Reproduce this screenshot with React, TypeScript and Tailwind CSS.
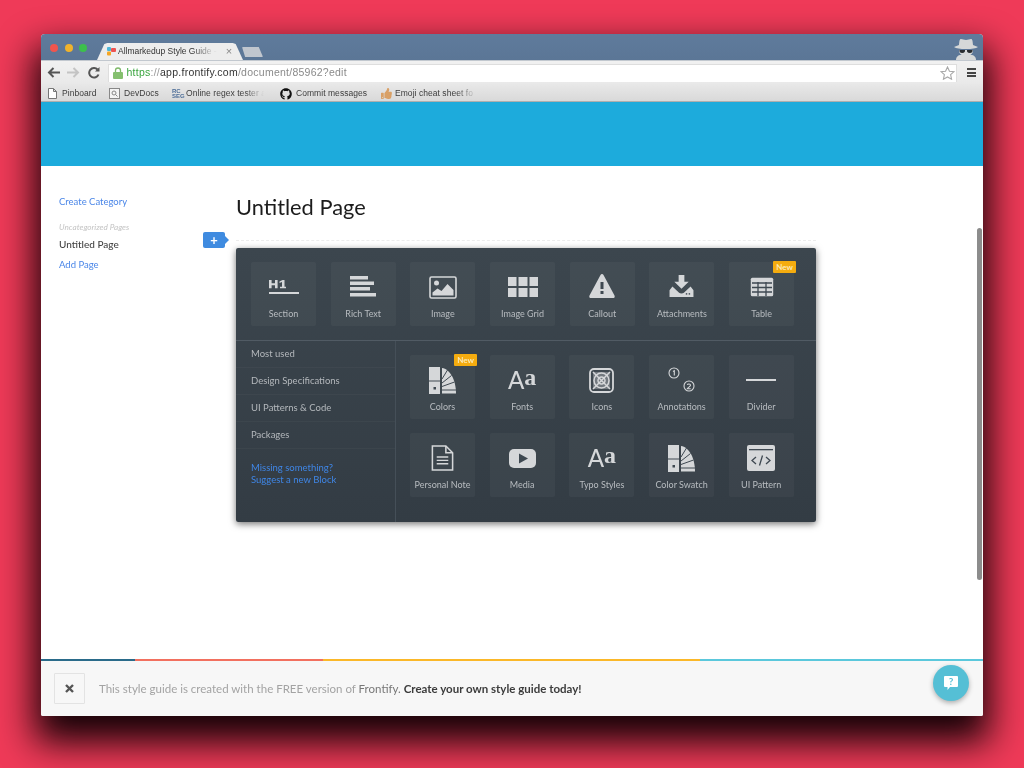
import type { ReactNode } from "react"
import { FaGithub, FaThumbsUp } from "react-icons/fa"

const lato = "font-['Lato','Noto_Sans',sans-serif]"

const Swatch = () => (
  <svg width="27" height="27" viewBox="0 0 27 27" fill="#d5d7d9">
    <path d="M0 0h11v27H0z" />
    <path d="M0 13.500h11v1H0z" fill="#3e4851" />
    <rect x="4.500" y="20" width="2.500" height="2.500" fill="#3e4851" />
    <path d="M13 1c8 1 14 12 14 25.500H13z" />
    <path d="M13 12l5.500-9M13 16l9.500-7.500M13 19.500l12.500-4.500M13 23h14" stroke="#3e4851" strokeWidth="1" fill="none" />
  </svg>
)

const AaGlyph = () => (
  <div className="flex items-start text-[#d5d7d9] h-[20px] -mt-[3px]">
    <span className="text-[24px] leading-[22px] font-medium">A</span>
    <span className="text-[24px] leading-[16px] font-bold font-['Liberation_Serif',serif]">a</span>
  </div>
)

const icons: Record<string, ReactNode> = {
  Section: (
    <svg width="30" height="20" viewBox="0 0 30 20" fill="#d5d7d9">
      <path d="M0 3h2.600v3.200h3.400V3h2.600v8.300H6V8.300H2.600v3H0z" />
      <path d="M10.500 4.500L13.500 3h2v6.800h1.500v1.500h-6V9.800h2V5l-2.500 1z" />
      <rect y="15" width="30" height="2" />
    </svg>
  ),
  "Rich Text": (
    <svg width="26" height="21" viewBox="0 0 26 21" fill="#d5d7d9" className="-mt-[2px]">
      <rect width="18" height="3.500" />
      <rect y="5.500" width="24" height="3.500" />
      <rect y="11" width="20" height="3.500" />
      <rect y="17" width="26" height="3.500" />
    </svg>
  ),
  Image: (
    <svg width="28" height="23" viewBox="0 0 28 23">
      <rect x="1" y="1" width="26" height="21" rx="1.500" fill="none" stroke="#d5d7d9" strokeWidth="1.600" />
      <circle cx="7.500" cy="7" r="2.500" fill="#d5d7d9" />
      <path d="M3.500 19.500v-3l5-4 4 2.500 6-7 6 6v5.500z" fill="#d5d7d9" />
    </svg>
  ),
  "Image Grid": (
    <svg width="30" height="20" viewBox="0 0 30 20" fill="#d5d7d9">
      <rect width="8.500" height="9" />
      <rect x="10.500" width="9" height="9" />
      <rect x="21.500" width="8.500" height="9" />
      <rect y="11" width="8.500" height="9" />
      <rect x="10.500" y="11" width="9" height="9" />
      <rect x="21.500" y="11" width="8.500" height="9" />
    </svg>
  ),
  Callout: (
    <svg width="26" height="24" viewBox="0 0 26 24" className="-mt-[2px]">
      <path d="M13 0c.7 0 1.200.4 1.500 1l11 20.500c.6 1.200-.1 2.500-1.500 2.500H2c-1.400 0-2.100-1.300-1.500-2.500L11.500 1c.3-.6.800-1 1.500-1z" fill="#d5d7d9" />
      <rect x="11.500" y="8" width="3" height="7" fill="#3e4851" />
      <rect x="11.500" y="17" width="3" height="3" fill="#3e4851" />
    </svg>
  ),
  Attachments: (
    <svg width="25" height="22" viewBox="0 0 25 23" fill="#d5d7d9" className="-mt-[3px]">
      <path d="M9.500 0h6v7h4.500l-7.500 7.500L5 7h4.500z" />
      <path d="M0 16l3-4 7 6.500c1.300 1 3.700 1 5 0l7-6.500 3 4v7H0z" />
      <rect x="17" y="19" width="1.500" height="1.500" fill="#3e4851" />
      <rect x="20" y="19" width="1.500" height="1.500" fill="#3e4851" />
    </svg>
  ),
  Table: (
    <svg width="24" height="20" viewBox="0 0 24 20">
      <rect x="0.800" y="0.800" width="22.400" height="18.400" rx="1.500" fill="#d5d7d9" />
      <path d="M2 6h20M2 10.500h20M2 15h20M8 5v14M16 5v14" stroke="#3e4851" strokeWidth="1.300" />
    </svg>
  ),
  Colors: <Swatch />,
  Fonts: <AaGlyph />,
  Icons: (
    <svg width="25" height="25" viewBox="0 0 25 25" fill="none" stroke="#d5d7d9">
      <rect x="1" y="1" width="23" height="23" rx="4" strokeWidth="1.800" />
      <rect x="4" y="4" width="17" height="17" fill="#d5d7d9" stroke="none" opacity=".35" />
      <circle cx="12.500" cy="12.500" r="7.500" strokeWidth="1.500" />
      <circle cx="12.500" cy="12.500" r="3.500" strokeWidth="1.500" />
      <path d="M4 4l17 17M21 4L4 21" strokeWidth="1.500" />
    </svg>
  ),
  Annotations: (
    <svg width="28" height="26" viewBox="0 0 28 26" fill="none" stroke="#d5d7d9" strokeWidth="1.100">
      <circle cx="6" cy="6" r="5" />
      <circle cx="21" cy="19" r="5" />
      <path d="M5 4.500l1.300-.8v4.800" />
      <path d="M19.300 17.800c.4-1.200 3.200-1.200 3.200.4 0 1.200-2.600 2.200-3.200 3.500h3.400" />
    </svg>
  ),
  Divider: (
    <svg width="30" height="3" viewBox="0 0 30 3" fill="#d5d7d9">
      <rect width="30" height="2" />
    </svg>
  ),
  "Personal Note": (
    <svg width="23" height="26" viewBox="0 0 23 27" fill="none" stroke="#d5d7d9" strokeWidth="1.600">
      <path d="M1 1h14l7 7v18H1z" />
      <path d="M15 1v7h7" />
      <path d="M5.500 12.500h12M5.500 16h12M5.500 19.500h12" strokeWidth="1.400" />
    </svg>
  ),
  Media: (
    <svg width="27" height="19" viewBox="0 0 27 19">
      <rect width="27" height="19" rx="5" fill="#d5d7d9" />
      <path d="M10 4.500l9 5-9 5z" fill="#3e4851" />
    </svg>
  ),
  "Typo Styles": <AaGlyph />,
  "Color Swatch": <Swatch />,
  "UI Pattern": (
    <svg width="28" height="26" viewBox="0 0 28 26">
      <rect width="28" height="26" rx="2" fill="#d5d7d9" />
      <rect x="2" y="4" width="24" height="1.300" fill="#3e4851" />
      <path d="M9 12l-4 3.500L9 19M19 12l4 3.500L19 19M15.500 10.500l-3 10" fill="none" stroke="#3e4851" strokeWidth="1.300" />
    </svg>
  ),
}

function Tile({ label, isNew }: { label: string; isNew?: boolean }) {
  return (
    <div className="relative w-[65px] h-[64px] rounded-[2px] bg-white/[0.035] flex flex-col items-center">
      <div className="h-[42px] mt-[4px] flex items-center justify-center">{icons[label]}</div>
      <span className="absolute top-[46px] w-full text-center text-[9px] leading-[12px] text-[#b8bcc0] whitespace-nowrap">{label}</span>
      {isNew && (
        <span className="absolute -top-[1px] -right-[2px] w-[23px] h-[12px] rounded-[1px] bg-[#f5ac0f] text-[#fbe9b8] text-[8px] leading-[12px] text-center font-bold">New</span>
      )}
    </div>
  )
}

const bookmarkClass = "text-[8.500px] text-[#3c3c3c] tracking-[0.05px] whitespace-nowrap"
const fadeClass = "[mask-image:linear-gradient(90deg,#000_75%,transparent)]"

export default function App() {
  return (
    <div className="w-[1024px] h-[768px] overflow-hidden pt-[34px] pl-[41px] bg-[#ef3a58]">
      <div className={`w-[942px] h-[682px] flex flex-col rounded-t-[4px] rounded-b-[2px] overflow-hidden bg-white shadow-[0_20px_36px_6px_rgba(12,0,4,0.97)] blur-[0.5px] ${lato}`}>
        {/* browser chrome */}
        <div className="h-[26px] shrink-0 flex items-end bg-[linear-gradient(#5f7b9c,#5b7696)] relative">
          <div className="absolute left-[9px] top-[10px] flex gap-[6.500px]">
            <span className="w-[8px] h-[8px] rounded-full bg-[#f0554d]" />
            <span className="w-[8px] h-[8px] rounded-full bg-[#f0b32c]" />
            <span className="w-[8px] h-[8px] rounded-full bg-[#3cc04c]" />
          </div>
          <div className="ml-[56px] w-[146px] h-[17px] flex items-center pl-[10px] bg-[#ededed] [clip-path:polygon(0_100%,5%_6%,7%_0,93%_0,95%_6%,100%_100%)]">
            <svg width="9" height="9" viewBox="0 0 9 9" className="shrink-0">
              <rect x="0" y="0" width="4" height="4" rx="1" fill="#4db6d8" />
              <rect x="4" y="1" width="5" height="4" rx="1" fill="#ef5350" />
              <rect x="0" y="4.500" width="4" height="4" rx="1" fill="#f5a623" />
            </svg>
            <span className={`ml-[2px] font-['Liberation_Sans',sans-serif] text-[8.500px] text-[#333] whitespace-nowrap ${fadeClass}`}>Allmarkedup Style Guide -</span>
            <span className="ml-[9px] text-[#888] text-[11px] leading-none font-['Liberation_Sans',sans-serif]">×</span>
          </div>
          <div className="ml-[-1px] mb-[3px] w-[21px] h-[10px] bg-[#c0c6ce] rounded-[1px] [clip-path:polygon(0_0,80%_0,100%_100%,15%_100%)]" />
          {/* incognito figure */}
          <svg width="24" height="21" viewBox="0 0 24 21" className="absolute right-[5px] top-[5px]" fill="#d6d8d8">
            <path d="M7 0c1.500 0 3 1 5 1s3.500-1 5-1c1.200 0 1.700 1.500 2 6l5 2c-2 1.500-6 2-12 2S2 9.500 0 8l5-2c.3-4.500.8-6 2-6z" />
            <path d="M5 11h14c0 4-3 6-7 6s-7-2-7-6z" />
            <path d="M2 21c0-3 2-5 5-5h10c3 0 5 2 5 5z" />
            <path d="M5.500 11h5.500c.3 1-.3 3-2.800 3s-3-1.600-2.700-3zM13 11h5.500c.3 1.400-.2 3-2.700 3s-3.100-2-2.800-3z" fill="#2a2d30" />
          </svg>
        </div>

        <div className="h-[24px] shrink-0 flex items-center bg-[linear-gradient(#f1f1f1,#e9e9e9)] border-t border-[#c2c8cf] font-['Liberation_Sans',sans-serif]">
          <svg width="13" height="11" viewBox="0 0 13 11" className="ml-[6px]" fill="none" stroke="#555" strokeWidth="2">
            <path d="M13 5.500H2M6.500 1L2 5.500 6.500 10" />
          </svg>
          <svg width="13" height="11" viewBox="0 0 13 11" className="ml-[7px]" fill="none" stroke="#c4c4c4" strokeWidth="2">
            <path d="M0 5.500h11M6.500 1L11 5.500 6.500 10" />
          </svg>
          <svg width="12" height="12" viewBox="0 0 12 12" className="ml-[8px]" fill="none" stroke="#555" strokeWidth="2">
            <path d="M10.500 7.500A4.800 4.800 0 1 1 9.500 2.500" />
            <path d="M11.500 0v4.500H7z" fill="#555" stroke="none" />
          </svg>
          <div className="ml-[8px] w-[849px] h-[18px] bg-white flex items-center pl-[3px] border border-[#dedede] border-b-0">
            <svg width="10" height="12" viewBox="0 0 10 12" className="ml-[0.500px]">
              <path d="M2.500 5.500V3.500a2.500 2.500 0 0 1 5 0v2" fill="none" stroke="#7fb96a" strokeWidth="1.300" />
              <rect y="5" width="10" height="7" rx="1" fill="#85c06f" />
            </svg>
            <span className="ml-[4px] text-[10.500px] tracking-[0.250px] text-[#555] whitespace-nowrap">
              <span className="text-[#3aa53f]">https</span>
              <span className="text-[#999]">://</span>
              <span className="text-[#333]">app.frontify.com</span>
              <span className="text-[#8a8a8a]">/document/85962?edit</span>
            </span>
            <svg width="15" height="14" viewBox="0 0 24 23" className="ml-auto mr-[1px]" fill="#fff" stroke="#a8a8a8" strokeWidth="1.800">
              <path d="M12 1.500l3.200 7 7.500.8-5.600 5 1.600 7.400L12 18l-6.700 3.700 1.600-7.400-5.600-5 7.500-.8z" />
            </svg>
          </div>
          <div className="ml-[10px] w-[9px] flex flex-col gap-[1.500px]">
            <span className="h-[2px] bg-[#444]" />
            <span className="h-[2px] bg-[#444]" />
            <span className="h-[2px] bg-[#444]" />
          </div>
        </div>

        <div className="h-[18px] shrink-0 flex items-center pt-[2px] bg-[linear-gradient(#e8e8e8,#d9d9d9)] border-b border-[#aeaeae] font-['Liberation_Sans',sans-serif]">
          <svg width="9" height="11" viewBox="0 0 9 11" className="ml-[7px]" fill="#fff" stroke="#777">
            <path d="M.5.500h5l3 3v7h-8zM5.500.500v3h3" />
          </svg>
          <span className={`ml-[5px] w-[35px] ${bookmarkClass}`}>Pinboard</span>
          <svg width="11" height="11" viewBox="0 0 11 11" className="ml-[12px]" fill="#f4f4f4" stroke="#888">
            <rect x=".5" y=".5" width="10" height="10" />
            <circle cx="5" cy="5" r="2" fill="none" />
            <path d="M6.500 6.500L8.500 8.500" />
          </svg>
          <span className={`ml-[4px] w-[35px] ${bookmarkClass}`}>DevDocs</span>
          <span className="ml-[13px] w-[10px] text-[6px] leading-[5px] font-bold text-[#4b6c97]">RC<br />SEG</span>
          <span className={`ml-[4px] w-[78px] ${bookmarkClass} ${fadeClass}`}>Online regex tester a</span>
          <FaGithub className="ml-[16px] text-[#111]" size={12} />
          <span className={`ml-[4px] w-[72px] ${bookmarkClass}`}>Commit messages</span>
          <FaThumbsUp className="ml-[13px] text-[#d9a066]" size={11} />
          <span className={`ml-[3px] w-[82px] ${bookmarkClass} ${fadeClass}`}>Emoji cheat sheet fo</span>
        </div>

        {/* app header */}
        <div className="h-[64px] shrink-0 bg-[#1dabdc]" />

        {/* page body */}
        <div className="flex-1 flex relative min-h-0">
          <aside className="w-[195px] shrink-0 pl-[18px] pt-[29px]">
            <a className="block text-[9.500px] leading-[13px] text-[#4a86e8]">Create Category</a>
            <p className="mt-[14px] text-[8.200px] leading-[11px] italic text-[#c4c4c4]">Uncategorized Pages</p>
            <p className="mt-[5px] text-[10px] leading-[13px] text-[#444] font-medium">Untitled Page</p>
            <a className="block mt-[7px] text-[9.500px] leading-[13px] text-[#4a86e8]">Add Page</a>
          </aside>

          <main className="flex-1 pt-[26px] relative">
            <h1 className="text-[21.800px] leading-[29px] text-[#1c1c1c]">Untitled Page</h1>
            <div className="absolute left-[0px] top-[74px] w-[580px] border-t border-dashed border-[#ececec]" />
            <div className="absolute left-[-33px] top-[66px] w-[26px] h-[16px]">
              <div className="w-[22px] h-[16px] rounded-[2px] bg-[#3f8be0] flex items-center justify-center text-white text-[13px] font-bold leading-none">+</div>
              <div className="absolute left-[22px] top-[4px] w-0 h-0 border-y-[4px] border-y-transparent border-l-[4px] border-l-[#3f8be0]" />
            </div>

            <div className="mt-[27px] w-[580px] h-[274px] rounded-[2px] bg-[linear-gradient(#3c464e,#333c44)] shadow-[0_2px_7px_rgba(0,0,0,0.55)] flex flex-col">
              <div className="h-[93px] shrink-0 flex gap-[14.700px] pl-[15px] pt-[14px] border-b border-[#515b64]">
                <Tile label="Section" />
                <Tile label="Rich Text" />
                <Tile label="Image" />
                <Tile label="Image Grid" />
                <Tile label="Callout" />
                <Tile label="Attachments" />
                <Tile label="Table" isNew />
              </div>
              <div className="flex-1 flex min-h-0">
                <div className="w-[160px] shrink-0 border-r border-[#454f58] text-[9.500px] text-[#b4b8bc]">
                  <div className="h-[27px] pl-[15px] flex items-center border-b border-white/[0.03]">Most used</div>
                  <div className="h-[27px] pl-[15px] flex items-center border-b border-white/[0.03]">Design Specifications</div>
                  <div className="h-[27px] pl-[15px] flex items-center border-b border-white/[0.03]">UI Patterns &amp; Code</div>
                  <div className="h-[27px] pl-[15px] flex items-center border-b border-white/[0.03]">Packages</div>
                  <div className="pl-[15px] pt-[13px] text-[#3f86e6] leading-[12px]">
                    <p>Missing something?</p>
                    <p>Suggest a new Block</p>
                  </div>
                </div>
                <div className="flex-1 pl-[14px] pt-[14px] grid grid-cols-[repeat(5,65px)] auto-rows-[64px] gap-x-[14.700px] gap-y-[14px]">
                  <Tile label="Colors" isNew />
                  <Tile label="Fonts" />
                  <Tile label="Icons" />
                  <Tile label="Annotations" />
                  <Tile label="Divider" />
                  <Tile label="Personal Note" />
                  <Tile label="Media" />
                  <Tile label="Typo Styles" />
                  <Tile label="Color Swatch" />
                  <Tile label="UI Pattern" />
                </div>
              </div>
            </div>
          </main>

          <div className="absolute right-[1px] top-[62px] w-[5px] h-[352px] rounded-full bg-[#8c8c8c]" />
        </div>

        {/* footer */}
        <div className="h-[2.500px] shrink-0 flex">
          <span className="w-[94px] bg-[#2a6b8a]" />
          <span className="w-[188px] bg-[#f2705f]" />
          <span className="w-[377px] bg-[#fbb829]" />
          <span className="flex-1 bg-[#5bc8dc]" />
        </div>
        <div className="h-[55px] shrink-0 bg-[#f7f7f7] flex items-center pl-[13px] relative">
          <div className="w-[31px] h-[31px] border border-[#e3e3e3] rounded-[1px] flex items-center justify-center">
            <svg width="9" height="9" viewBox="0 0 9 9" stroke="#555" strokeWidth="2.400">
              <path d="M1 1l7 7M8 1L1 8" />
            </svg>
          </div>
          <p className="ml-[14px] text-[11.500px] text-[#a3a3a3] whitespace-nowrap">
            This style guide is created with the FREE version of <span className="text-[#777]">Frontify.</span>{" "}
            <span className="text-[#3c3c3c] font-bold">Create your own style guide today!</span>
          </p>
          <div className="absolute right-[14px] top-[4px] w-[36px] h-[36px] rounded-full bg-[#55bfd5] shadow-[0_2px_5px_rgba(0,0,0,0.3)] flex items-center justify-center">
            <svg width="16" height="16" viewBox="0 0 16 16">
              <path d="M2 1h12a1 1 0 0 1 1 1v9a1 1 0 0 1-1 1H7l-2.500 3v-3H2a1 1 0 0 1-1-1V2a1 1 0 0 1 1-1z" fill="#fff" />
              <text x="8" y="10" textAnchor="middle" fontSize="10" fontWeight="700" fill="#55bfd5" fontFamily="Lato, sans-serif">?</text>
            </svg>
          </div>
        </div>
      </div>
    </div>
  )
}
